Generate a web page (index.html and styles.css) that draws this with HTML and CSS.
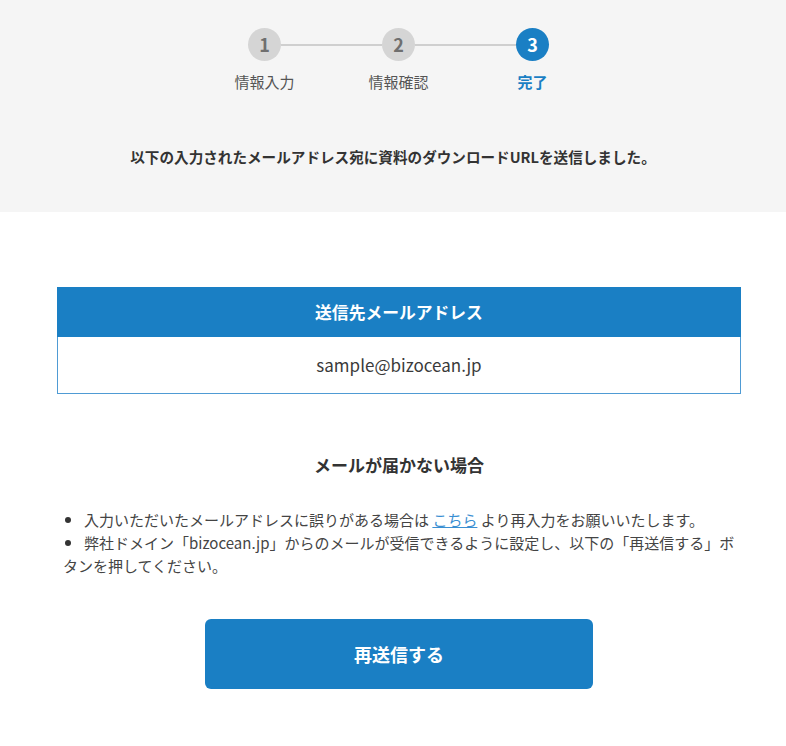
FILE: index.html
```html
<!DOCTYPE html>
<html lang="ja">
<head>
<meta charset="utf-8">
<title>送信完了</title>
<link rel="stylesheet" href="styles.css">
</head>
<body>
<div class="band">
  <div class="steps">
    <div class="circle">1</div>
    <div class="bar"></div>
    <div class="circle">2</div>
    <div class="bar"></div>
    <div class="circle active">3</div>
    <div class="label c1">情報入力</div>
    <div class="label c3">情報確認</div>
    <div class="label c5 active">完了</div>
  </div>
  <p class="message">以下の入力されたメールアドレス宛に資料のダウンロードURLを送信しました。</p>
</div>
<div class="content">
  <div class="addr">
    <div class="addr-head">送信先メールアドレス</div>
    <div class="addr-body">sample@bizocean.jp</div>
  </div>
  <h2 class="heading">メールが届かない場合</h2>
  <ul class="notes">
    <li>入力いただいたメールアドレスに誤りがある場合は <a href="#" class="link">こちら</a> より再入力をお願いいたします。</li>
    <li>弊社ドメイン「bizocean.jp」からのメールが受信できるように設定し、以下の「再送信する」ボタンを押してください。</li>
  </ul>
  <div class="actions">
    <button class="resend" type="button">再送信する</button>
  </div>
</div>
</body>
</html>
```
FILE: styles.css
```css
html, body {
  margin: 0;
  padding: 0;
  background: #ffffff;
}
body {
  font-family: "Noto Sans CJK JP", "Noto Sans", sans-serif;
  color: #333333;
}
.band {
  background: #f5f5f5;
  padding: 28px 0 44px;
}
.steps {
  display: grid;
  grid-template-columns: 33px 101px 33px 101px 33px;
  grid-template-rows: 33px auto;
  justify-content: center;
  padding-left: 11px;
}
.circle {
  width: 33px;
  height: 33px;
  border-radius: 50%;
  background: #d5d5d5;
  color: #6f6f6f;
  font-weight: 700;
  font-size: 18px;
  line-height: 33px;
  text-align: center;
}
.circle.active {
  background: #1a7fc4;
  color: #ffffff;
}
.bar {
  height: 2px;
  background: #cfcfcf;
  align-self: center;
}
.label {
  grid-row: 2;
  justify-self: center;
  white-space: nowrap;
  font-size: 15px;
  line-height: 22px;
  margin-top: 10px;
  color: #555555;
}
.label.c1 { grid-column: 1; }
.label.c3 { grid-column: 3; }
.label.c5 { grid-column: 5; }
.label.active {
  color: #1a7fc4;
  font-weight: 700;
}
.message {
  margin: 53px 0 0;
  text-align: center;
  font-size: 14.6px;
  line-height: 22px;
  font-weight: 700;
  color: #333333;
}
.content {
  margin: 0 45px 0 57px;
  padding-top: 75px;
}
.addr {
  border: 1px solid #4f9bd4;
}
.addr-head {
  background: #1a7fc4;
  color: #ffffff;
  font-weight: 700;
  font-size: 16.8px;
  text-align: center;
  height: 49px;
  line-height: 49px;
  margin: -1px -1px 0;
  border-top: 1px solid #1a7fc4;
}
.addr-body {
  text-align: center;
  font-size: 17px;
  height: 56px;
  line-height: 56px;
  color: #3a3a3a;
}
.heading {
  margin: 58px 0 0;
  text-align: center;
  font-size: 17px;
  line-height: 26px;
  font-weight: 700;
  color: #333333;
}
.notes {
  list-style: none;
  margin: 30px 0 0;
  padding: 0 0 0 6px;
  font-size: 15px;
  line-height: 23px;
  color: #444444;
}
.notes li::before {
  content: "";
  display: inline-block;
  width: 6px;
  height: 6px;
  border-radius: 50%;
  background: #333333;
  vertical-align: middle;
  margin: 0 13px 3px 2px;
}
.link {
  color: #3a8fd2;
  text-decoration: underline;
}
.actions {
  display: flex;
  justify-content: center;
  padding: 42px 0 56px;
}
.resend {
  width: 388px;
  height: 70px;
  border: none;
  border-radius: 6px;
  background: #1a7fc4;
  color: #ffffff;
  font-family: "Noto Sans CJK JP", "Noto Sans", sans-serif;
  font-size: 18px;
  font-weight: 700;
  cursor: pointer;
}
```
